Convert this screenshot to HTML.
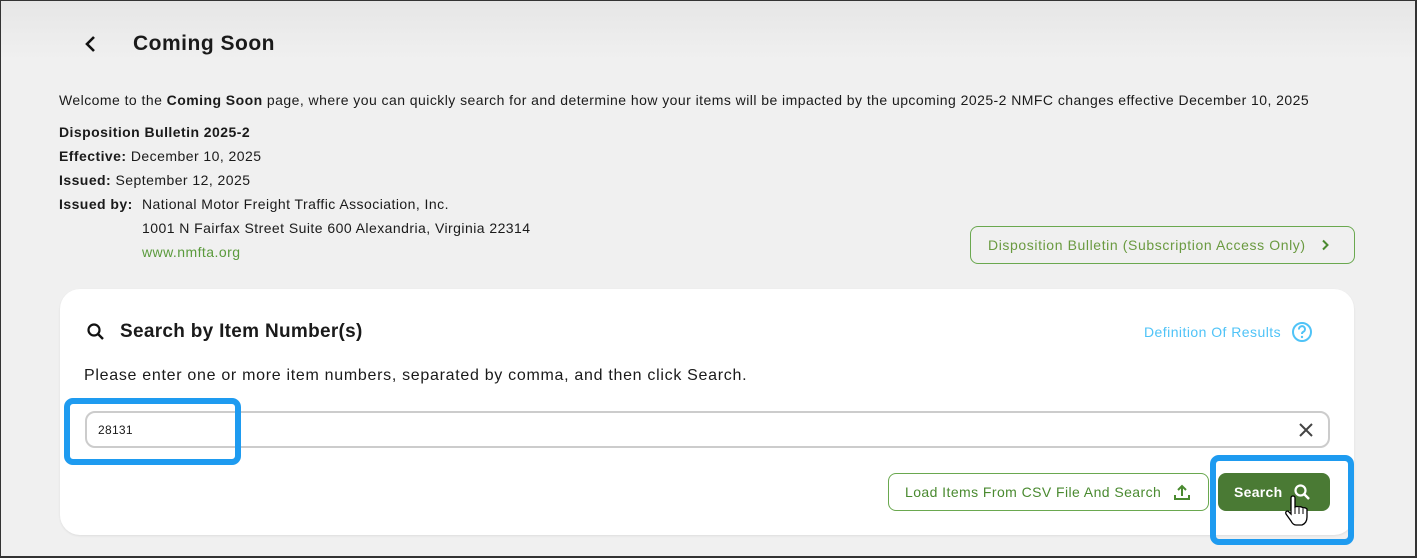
<!DOCTYPE html>
<html><head><style>
*{box-sizing:border-box;margin:0;padding:0}
body{width:1417px;height:558px;overflow:hidden;font-family:"Liberation Sans",Arial,sans-serif;color:#1a1a1a;background:#f0f0f0;position:relative}
.frame{position:absolute;inset:0;border:1px solid #333;border-right-width:2px;border-bottom-width:2px;background:linear-gradient(#e6e6e6,#f0f0f0 60px);}
.abs{position:absolute}
.t{font-size:14px;white-space:nowrap;letter-spacing:0.45px}
b{font-weight:bold}
.card{position:absolute;left:60px;top:289px;width:1294px;height:246px;background:#fff;border-radius:20px;box-shadow:0 1px 2px rgba(0,0,0,.08)}
.btn{position:absolute;border:1px solid #6aa84f;border-radius:8px;color:#4a8a30;font-size:14px;display:flex;align-items:center;white-space:nowrap;letter-spacing:0.6px}
.hl{position:absolute;border:6px solid #1e9bf0;border-radius:9px}
</style></head><body>
<div class="frame"></div>
<svg class="abs" style="left:83px;top:35px" width="16" height="18" viewBox="0 0 16 18"><path d="M11 2 L4 9 L11 16" stroke="#111" stroke-width="2.6" fill="none"/></svg>
<div class="abs" style="left:133px;top:32px;font-size:21px;font-weight:bold;color:#1a1a1a;letter-spacing:0.5px">Coming Soon</div>
<div class="abs t" style="left:59px;top:92px">Welcome to the <b>Coming Soon</b> page, where you can quickly search for and determine how your items will be impacted by the upcoming 2025-2 NMFC changes effective December 10, 2025</div>
<div class="abs t" style="left:59px;top:124px"><b>Disposition Bulletin 2025-2</b></div>
<div class="abs t" style="left:59px;top:148px"><b>Effective:</b> December 10, 2025</div>
<div class="abs t" style="left:59px;top:172px"><b>Issued:</b> September 12, 2025</div>
<div class="abs t" style="left:59px;top:196px"><b>Issued by:</b></div>
<div class="abs t" style="left:142px;top:196px">National Motor Freight Traffic Association, Inc.</div>
<div class="abs t" style="left:142px;top:220px">1001 N Fairfax Street Suite 600 Alexandria, Virginia 22314</div>
<div class="abs t" style="left:142px;top:244px;color:#5a9a3c">www.nmfta.org</div>
<div class="btn" style="left:970px;top:226px;width:385px;height:38px;padding-left:17px;color:#6a9a40">Disposition Bulletin (Subscription Access Only)
<svg style="margin-left:14px" width="10" height="12" viewBox="0 0 10 12"><path d="M3 1.5 L7.5 6 L3 10.5" stroke="#4a8a30" stroke-width="2" fill="none"/></svg></div>
<div class="card"></div>
<svg class="abs" style="left:86px;top:322px" width="20" height="20" viewBox="0 0 20 20"><circle cx="8" cy="8" r="5.5" stroke="#111" stroke-width="2.2" fill="none"/><path d="M12 12 L17 17" stroke="#111" stroke-width="2.4"/></svg>
<div class="abs" style="left:120px;top:321px;font-size:19px;font-weight:bold;letter-spacing:0.3px">Search by Item Number(s)</div>
<div class="abs t" style="left:1144px;top:324px;color:#4fc3f7;letter-spacing:0.45px">Definition Of Results</div>
<svg class="abs" style="left:1291px;top:321px" width="22" height="22" viewBox="0 0 22 22"><circle cx="11" cy="11" r="9" stroke="#4fc3f7" stroke-width="2" fill="none"/><path d="M8 8.5 A3 3 0 1 1 12 11 Q11 11.6 11 13" stroke="#4fc3f7" stroke-width="2" fill="none"/><circle cx="11" cy="16" r="1.2" fill="#4fc3f7"/></svg>
<div class="abs" style="left:84px;top:367px;font-size:16px;letter-spacing:0.7px;white-space:nowrap">Please enter one or more item numbers, separated by comma, and then click Search.</div>
<div class="abs" style="left:85px;top:411px;width:1245px;height:37px;border:2px solid #ccc;border-radius:10px"></div>
<div class="abs" style="left:98px;top:423px;font-size:12px;letter-spacing:0.3px">28131</div>
<svg class="abs" style="left:1298px;top:422px" width="16" height="16" viewBox="0 0 16 16"><path d="M2 2 L14 14 M14 2 L2 14" stroke="#444" stroke-width="2"/></svg>
<div class="btn" style="left:888px;top:473px;width:321px;height:38px;padding-left:16px;letter-spacing:0.43px">Load Items From CSV File And Search
<svg style="margin-left:12px" width="18" height="18" viewBox="0 0 18 18"><path d="M9 13 V3 M5 7 L9 3 L13 7 M2 12 V16 H16 V12" stroke="#4a8a30" stroke-width="2" fill="none"/></svg></div>
<div class="abs" style="left:1218px;top:473px;width:112px;height:38px;background:#4a7a34;border-radius:8px;color:#fff;font-size:14px;font-weight:bold;display:flex;align-items:center;padding-left:16px;letter-spacing:0.3px">Search
<svg style="margin-left:10px" width="18" height="18" viewBox="0 0 18 18"><circle cx="7.5" cy="7.5" r="5" stroke="#fff" stroke-width="2.2" fill="none"/><path d="M11 11 L16 16" stroke="#fff" stroke-width="2.5"/></svg></div>
<svg class="abs" style="left:1284px;top:495px" width="26" height="32" viewBox="0 0 26 32"><path d="M7 3 Q7 1 9 1 Q11 1 11 3 V12 Q13 11 15 12 Q17 11 19 13 Q21 12 23 14 V22 Q23 28 18 30 H12 Q9 30 7 26 L2 19 Q1 16 4 16 L7 19 Z" fill="#fff" stroke="#000" stroke-width="1.3"/><path d="M15 13 V19 M19 14 V19 M11 12 V19" stroke="#000" stroke-width="1"/></svg>
<div class="hl" style="left:64px;top:398px;width:177px;height:67px"></div>
<div class="hl" style="left:1210px;top:455px;width:144px;height:90px"></div>
</body></html>
